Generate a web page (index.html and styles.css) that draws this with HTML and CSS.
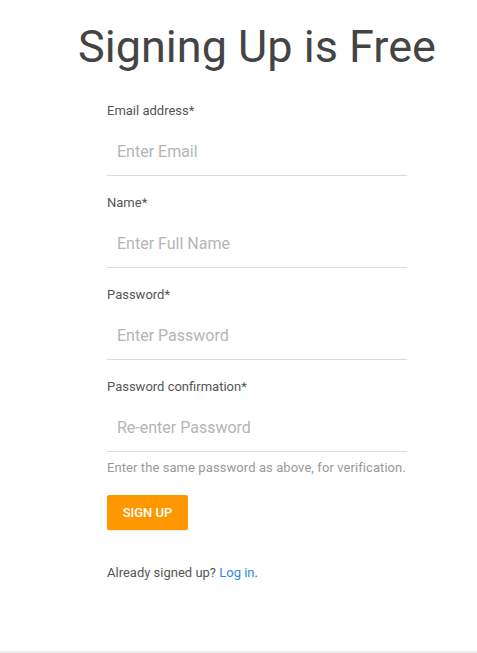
FILE: index.html
```html
<!DOCTYPE html>
<html>
<head>
<meta charset="utf-8">
<link rel="stylesheet" href="styles.css">
</head>
<body>
<div class="page">
  <h1 class="title">Signing Up is Free</h1>
  <form class="form">
    <div class="field">
      <label class="label">Email address*</label>
      <input class="input" type="email" placeholder="Enter Email">
    </div>
    <div class="field">
      <label class="label">Name*</label>
      <input class="input" type="text" placeholder="Enter Full Name">
    </div>
    <div class="field">
      <label class="label">Password*</label>
      <input class="input" type="password" placeholder="Enter Password">
    </div>
    <div class="field">
      <label class="label">Password confirmation*</label>
      <input class="input" type="password" placeholder="Re-enter Password">
      <p class="help">Enter the same password as above, for verification.</p>
    </div>
    <button class="btn" type="button">SIGN UP</button>
    <p class="login">Already signed up? <a href="#">Log in</a>.</p>
  </form>
</div>
<div class="footer-line"></div>
</body>
</html>
```
FILE: styles.css
```css
html, body {
  margin: 0;
  padding: 0;
  background: #fff;
  font-family: Roboto, "Noto Sans", sans-serif;
}
.page {
  height: 651px;
  display: flex;
  flex-direction: column;
  align-items: center;
  padding-left: 37px;
  box-sizing: border-box;
}
.title {
  margin: 20px 0 0 0;
  font-weight: 400;
  font-size: 45px;
  line-height: 54px;
  color: #444;
}
.form {
  width: 300px;
  margin-top: 28px;
  display: flex;
  flex-direction: column;
}
.field {
  display: flex;
  flex-direction: column;
  margin-bottom: 18px;
}
.label {
  font-size: 13px;
  line-height: 18px;
  color: #555;
}
.input {
  border: none;
  border-bottom: 1px solid #ddd;
  outline: none;
  font-family: Roboto, sans-serif;
  font-size: 16px;
  height: 50px;
  padding: 2px 10px 0 10px;
  margin-top: 6px;
  color: #333;
  box-sizing: border-box;
  background: transparent;
}
.input::placeholder {
  color: #b5b5b5;
}
.help {
  margin: 7px 0 0 0;
  font-size: 13px;
  letter-spacing: 0.08px;
  line-height: 18px;
  color: #9a9a9a;
}
.btn {
  align-self: flex-start;
  width: 81px;
  height: 35px;
  background: #ff9800;
  color: #fff;
  border: none;
  border-radius: 2px;
  font-family: Roboto, sans-serif;
  font-weight: 500;
  font-size: 13px;
  padding: 0;
  box-shadow: 0 1px 1px rgba(0,0,0,0.08);
}
.login {
  margin: 34px 0 0 0;
  font-size: 13px;
  line-height: 18px;
  color: #555;
}
.login a {
  color: #2e89e6;
  text-decoration: none;
}
.footer-line {
  height: 2px;
  background: #eee;
}
```
